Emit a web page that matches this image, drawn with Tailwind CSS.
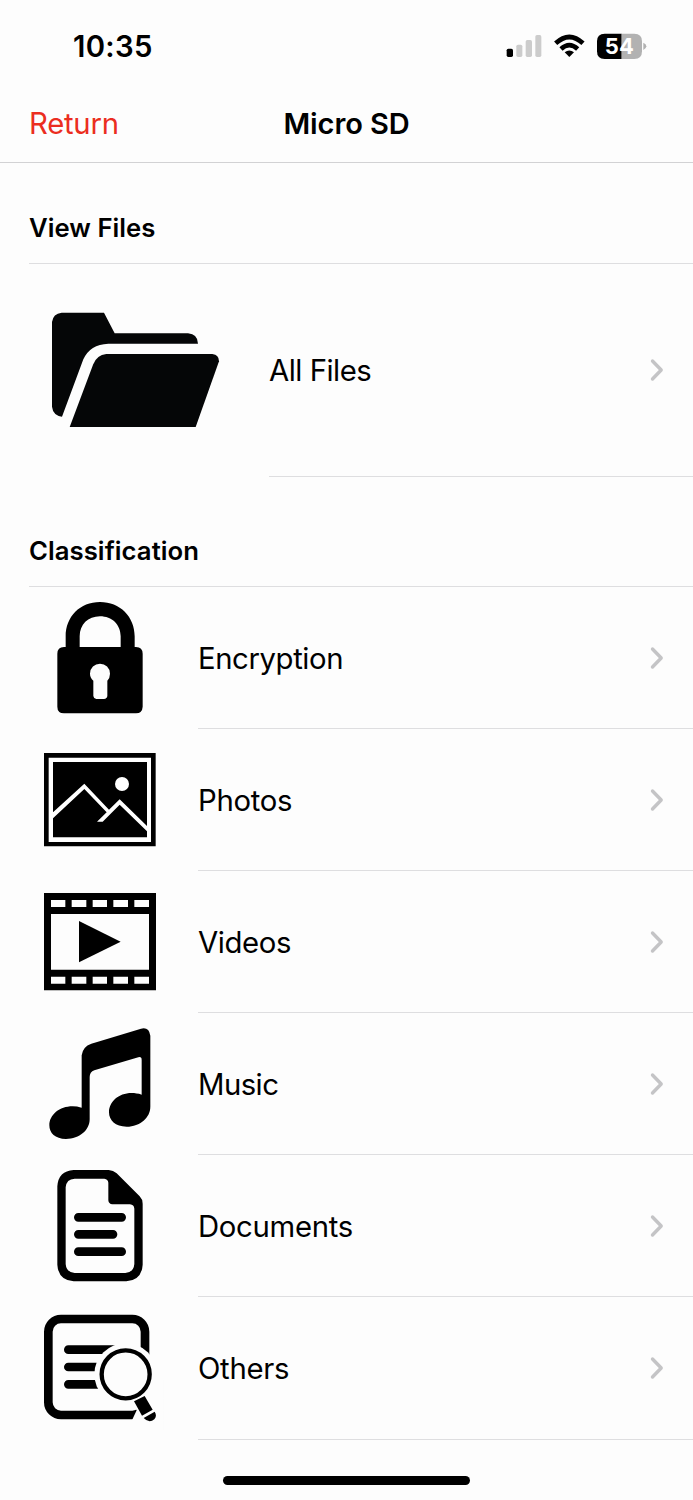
<!DOCTYPE html>
<html lang="en">
<head>
<meta charset="utf-8">
<meta name="viewport" content="width=device-width, initial-scale=1">
<title>Micro SD</title>
<script src="https://cdn.jsdelivr.net/npm/@tailwindcss/browser@4"></script>
</head>
<body class="bg-[#fdfdfd] text-black">
<svg class="hidden"><symbol id="chevron" viewBox="0 0 16 24"><path d="M2.5 3 11.2 12 2.5 21" fill="none" stroke="#c4c4c6" stroke-width="3.4" stroke-linecap="round" stroke-linejoin="round"/></symbol></svg>
<div class="flex h-[1500px] w-[693px] flex-col overflow-hidden font-['Inter','Liberation_Sans',sans-serif] text-[29.3px] tracking-[-0.4px]">
  <header class="flex h-[163px] shrink-0 flex-col border-b border-[#d2d2d4] bg-[#fdfdfd]">
    <div class="flex h-[84px] items-start justify-between pt-[10px] pl-[73px]">
      <span class="pt-[19px] text-[29.3px] leading-9 font-semibold tracking-[0.3px]">10:35</span>
      <svg class="h-[80px] w-[213px]" viewBox="0 0 639 240">
        <rect x="80" y="116" width="19" height="25" rx="5"/>
        <g fill="#ccc"><rect x="109" y="104" width="18" height="37" rx="5"/><rect x="137" y="90" width="19" height="51" rx="5"/><rect x="166" y="75" width="18" height="66" rx="5"/></g>
        <g fill="none" stroke="#000" stroke-width="14"><path d="M227 100Q268 62 309 100"/><path d="M243 117Q268 94 293 117"/></g>
        <path d="M254 127Q268 116 282 127L268 141Z"/>
        <path d="M374 71H425V147H374Q351 147 351 124V94Q351 71 374 71Z"/>
        <path d="M425 71H463Q486 71 486 94V124Q486 147 463 147H425Z" fill="#b2b2b2"/>
        <path d="M490 98Q499 102 499 109T490 120Z" fill="#b2b2b2"/>
        <text x="418" y="132" text-anchor="middle" fill="#fff" font-size="66" font-weight="700" letter-spacing="0">54</text>
      </svg>
    </div>
    <div class="grid h-[78px] grid-cols-3 items-center px-[29px] pt-px">
      <span class="text-[#eb2d20] tracking-[-0.25px]">Return</span>
      <h1 class="text-center text-[29px] font-semibold tracking-[-0.1px]">Micro SD</h1>
    </div>
  </header>
  <main class="flex flex-col">
    <section>
      <h2 class="ml-[29px] flex h-[101px] items-end border-b border-[#dedee0] pb-[17px] text-[25.7px] leading-9 font-semibold tracking-[0.03px]">View Files</h2>
      <div class="flex h-[213px] pl-[30px]">
        <svg class="h-[212px] w-[210px] fill-[#050607]" viewBox="0 -78 630 636"><path d="M95 68H222L254 130H474Q503 132 504 161H235Q180 163 160 208L96 380Q69 376 66 350V96Q69 71 95 68Z"/><path d="M119 411 189 224Q200 195 229 192H547Q567 194 567 214L497 411Z"/></svg>
        <div class="ml-[29px] flex flex-1 items-center justify-between border-b border-[#dedee0] pr-[27px]"><span class="pt-0.5 tracking-[-0.5px]">All Files</span><svg class="h-6 w-4"><use href="#chevron"/></svg></div>
      </div>
    </section>
    <section>
      <h2 class="ml-[29px] flex h-[110px] items-end border-b border-[#dedee0] pb-[17px] text-[25.7px] leading-9 font-semibold tracking-[0.05px]">Classification</h2>
      <div class="flex h-[142px] pl-[30px]">
        <svg class="h-[142px] w-[140px]" viewBox="0 -9 420 426"><path fill-rule="evenodd" d="M107 171V139C107 80 150 36 210 36S314 80 314 139V171H318Q338 172 338 191V350Q337 369 318 370H102Q82 369 82 350V191Q82 172 102 171ZM149 171H272V139C272 104 246 79 210 79S149 104 149 139ZM190 272V318Q191 326 199 327H222Q231 326 232 318V272Q240 263 240 251A30 30 0 0 0 180 251Q180 263 190 272Z"/></svg>
        <div class="ml-7 flex flex-1 items-center justify-between border-b border-[#dedee0] pr-[27px]"><span class="pt-0.5">Encryption</span><svg class="h-6 w-4"><use href="#chevron"/></svg></div>
      </div>
      <div class="flex h-[142px] pl-[30px]">
        <svg class="h-[142px] w-[140px]" viewBox="0 -33 420 426"><path d="M42 39H377V319H42Z"/><path d="M56 53H363V306H56Z" fill="#fff"/><path d="M69 66H351V292H69Z"/><circle cx="276" cy="132" r="21" fill="#fff"/><path fill="#fff" d="M69 217 163 131 237 209 269 178 351 258V274L269 194 218 245H201L230 217 163 147 69 235Z"/></svg>
        <div class="ml-7 flex flex-1 items-center justify-between border-b border-[#dedee0] pr-[27px]"><span class="pt-0.5 tracking-[-0.3px]">Photos</span><svg class="h-6 w-4"><use href="#chevron"/></svg></div>
      </div>
      <div class="flex h-[142px] pl-[30px]">
        <svg class="h-[142px] w-[140px]" viewBox="0 -27 420 426"><path fill-rule="evenodd" d="M42 39H378V331H42ZM63 102V269H357V102ZM63 60V81H106V60ZM125 60V81H169V60ZM188 60V81H231V60ZM250 60V81H294V60ZM313 60V81H357V60ZM63 290V311H106V290ZM125 290V311H169V290ZM188 290V311H231V290ZM250 290V311H294V290ZM313 290V311H357V290Z"/><path d="M147 123 272 185 147 247Z"/></svg>
        <div class="ml-7 flex flex-1 items-center justify-between border-b border-[#dedee0] pr-[27px]"><span class="pt-0.5">Videos</span><svg class="h-6 w-4"><use href="#chevron"/></svg></div>
      </div>
      <div class="flex h-[142px] pl-[30px]">
        <svg class="h-[142px] w-[140px]" viewBox="0 -21 420 426"><path d="M155 263V106Q158 80 184 71L333 26Q357 20 361 47V260C361 292 331 320 290 320C256 320 237 301 237 277C237 239 279 207 335 224V120Q335 109 325 112L193 151Q179 156 179 171V298C179 330 149 357 108 357C75 357 58 339 58 316C58 278 103 248 155 263Z"/></svg>
        <div class="ml-7 flex flex-1 items-center justify-between border-b border-[#dedee0] pr-[27px]"><span class="pt-0.5 tracking-[-0.55px]">Music</span><svg class="h-6 w-4"><use href="#chevron"/></svg></div>
      </div>
      <div class="flex h-[142px] pl-[30px]">
        <svg class="h-[142px] w-[140px]" viewBox="0 -15 420 426"><path fill-rule="evenodd" d="M131 30H236Q250 31 260 40L329 109Q338 118 338 131V314Q335 361 289 364H131Q85 361 82 314V79Q85 33 131 30ZM134 56Q109 57 107 82V312Q109 337 134 339H286Q311 337 313 312V146Q312 134 300 133H247Q236 132 235 121V68Q234 57 223 56Z"/><path d="M145 172H275M145 223H249M145 275H275" fill="none" stroke="#000" stroke-width="26" stroke-linecap="round"/></svg>
        <div class="ml-7 flex flex-1 items-center justify-between border-b border-[#dedee0] pr-[27px]"><span class="pt-[3px] tracking-[-0.3px]">Documents</span><svg class="h-6 w-4"><use href="#chevron"/></svg></div>
      </div>
      <div class="flex h-[143px] pl-[30px]">
        <svg class="h-[143px] w-[140px]" viewBox="0 -9 420 429"><rect x="55" y="57" width="290" height="288" rx="38" fill="none" stroke="#000" stroke-width="26"/><path d="M115 149H260M115 201H230M115 253H230" fill="none" stroke="#000" stroke-width="26" stroke-linecap="round"/><circle cx="287" cy="223" r="94" fill="#fdfdfd"/><path d="M306 361 320 331 298 296 330 240H400V390H306Z" fill="#fdfdfd"/><circle cx="287" cy="223" r="72" fill="#fdfdfd" stroke="#000" stroke-width="13"/><path d="M312 304 344 288 368 329 336 347ZM341 354 374 335Q382 347 373 358Q357 371 341 354Z"/></svg>
        <div class="ml-7 flex flex-1 items-center justify-between border-b border-[#dedee0] pr-[27px]"><span class="pt-0.5 tracking-[-0.3px]">Others</span><svg class="h-6 w-4"><use href="#chevron"/></svg></div>
      </div>
    </section>
  </main>
  <div class="mt-[36px] ml-[223px] h-[9px] w-[247px] shrink-0 rounded-full bg-black"></div>
</div>
</body>
</html>
